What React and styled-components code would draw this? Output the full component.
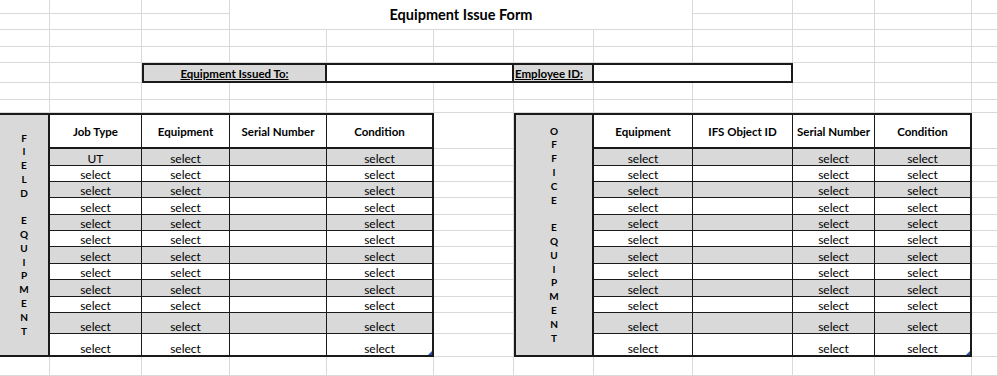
import React from 'react';
import styled, { createGlobalStyle } from 'styled-components';

const COLS = [50, 92, 88, 97, 107, 80, 80, 99, 100, 82, 97, 26];
const ROWS = [14, 16, 17, 16, 20, 17, 13, 36, 17, 16, 16, 17, 16, 16, 17, 16, 17, 16, 21, 23, 19];
const DATA_ROWS = [17, 16, 16, 17, 16, 16, 17, 16, 17, 16, 21, 21];

const GRID = '#d9d9d9';
const FILL = '#d9d9d9';
const INK = '#1a1a1a';

const Global = createGlobalStyle`
  html, body { margin: 0; padding: 0; background: #fff; }
  body { font-family: Lato, "Liberation Sans", sans-serif; color: #000; overflow: hidden; }
  * { box-sizing: border-box; }
`;

const Sheet = styled.div`
  display: grid;
  grid-template-columns: ${COLS.map((c) => c + 'px').join(' ')};
  grid-template-rows: ${ROWS.map((r) => r + 'px').join(' ')};
  width: 998px;
  height: 376px;
  overflow: hidden;
`;

const GridCell = styled.div`
  grid-row: ${(p) => p.$r};
  grid-column: ${(p) => p.$c};
  border-right: 1px solid ${GRID};
  border-bottom: 1px solid ${GRID};
`;

const Title = styled.div`
  grid-row: 1 / 3;
  grid-column: 4 / 9;
  display: flex;
  align-items: center;
  justify-content: center;
  font-weight: 700;
  font-size: 14.5px;
  border-right: 1px solid ${GRID};
  border-bottom: 1px solid ${GRID};
`;

const InfoBar = styled.div`
  grid-row: 5;
  grid-column: 3 / 10;
  display: grid;
  grid-template-columns: 183px 187px 80px 1fr;
  border: 2px solid ${INK};
`;

const InfoLabel = styled.div`
  background: ${FILL};
  display: flex;
  align-items: center;
  justify-content: ${(p) => (p.$left ? 'flex-start' : 'center')};
  padding-left: ${(p) => (p.$left ? '1px' : '0')};
  font-weight: 700;
  font-size: 11.5px;
  text-decoration: underline;
  border-right: 2px solid ${INK};
`;

const InfoValue = styled.div`
  background: #fff;
  border-right: ${(p) => (p.$last ? 'none' : `2px solid ${INK}`)};
`;

const Table = styled.div`
  grid-row: 8 / 21;
  grid-column: ${(p) => p.$span};
  display: grid;
  grid-template-columns: ${(p) => p.$template};
  grid-template-rows: 34px ${DATA_ROWS.map((r) => r + 'px').join(' ')};
  border: 2px solid ${INK};
  border-left: ${(p) => (p.$open ? 'none' : `2px solid ${INK}`)};
  background: #fff;
`;

const SideLabel = styled.div`
  grid-row: 1 / -1;
  grid-column: 1;
  background: ${FILL};
  border-right: 2px solid ${INK};
  display: flex;
  flex-direction: column;
  align-items: center;
  justify-content: center;
`;

const Letter = styled.span`
  display: block;
  font-weight: 700;
  font-size: 10px;
  line-height: 13.8px;
  height: 13.8px;
`;

const HeadCell = styled.div`
  display: flex;
  align-items: center;
  justify-content: center;
  font-weight: 700;
  font-size: 11.5px;
  border-bottom: 2px solid ${INK};
  border-right: ${(p) => (p.$last ? 'none' : `1px solid ${INK}`)};
`;

const DataCell = styled.div`
  position: relative;
  display: flex;
  align-items: flex-end;
  justify-content: center;
  font-size: 12px;
  line-height: 12px;
  background: ${(p) => (p.$shaded ? FILL : '#fff')};
  border-right: ${(p) => (p.$lastCol ? 'none' : `1px solid ${INK}`)};
  border-bottom: ${(p) => (p.$lastRow ? 'none' : `1px solid ${INK}`)};
`;

const Handle = styled.span`
  position: absolute;
  right: 0;
  bottom: 0;
  width: 0;
  height: 0;
  border-left: 4px solid transparent;
  border-bottom: 4px solid #2b4fa8;
`;

const occupied = new Set();
const mark = (r1, r2, c1, c2) => {
  for (let r = r1; r <= r2; r++) for (let c = c1; c <= c2; c++) occupied.add(r + ':' + c);
};
mark(1, 2, 4, 8);
mark(5, 5, 3, 9);
mark(8, 20, 1, 5);
mark(8, 20, 7, 11);

const emptyCells = [];
for (let r = 1; r <= ROWS.length; r++) {
  for (let c = 1; c <= COLS.length; c++) {
    if (!occupied.has(r + ':' + c)) emptyCells.push({ r, c });
  }
}

const fieldRows = ['UT', ...Array(11).fill('select')].map((job) => [job, 'select', '', 'select']);
const officeRows = Array(12).fill(['select', '', 'select', 'select']);

function SheetTable({ span, template, open, label, headers, rows }) {
  return (
    <Table $span={span} $template={template} $open={open}>
      <SideLabel>
        {label.split('').map((ch, i) => (
          <Letter key={i}>{ch === ' ' ? '\u00a0' : ch}</Letter>
        ))}
      </SideLabel>
      {headers.map((h, i) => (
        <HeadCell key={h} $last={i === headers.length - 1}>
          {h}
        </HeadCell>
      ))}
      {rows.map((row, ri) =>
        row.map((v, ci) => (
          <DataCell
            key={ri + '-' + ci}
            $shaded={ri % 2 === 0}
            $lastCol={ci === row.length - 1}
            $lastRow={ri === rows.length - 1}
          >
            {v}
            {ri === rows.length - 1 && ci === row.length - 1 && <Handle />}
          </DataCell>
        ))
      )}
    </Table>
  );
}

export default function App() {
  return (
    <>
      <Global />
      <Sheet>
        {emptyCells.map(({ r, c }) => (
          <GridCell key={r + '-' + c} $r={r} $c={c} />
        ))}
        <Title>Equipment Issue Form</Title>
        <InfoBar>
          <InfoLabel>Equipment Issued To:</InfoLabel>
          <InfoValue />
          <InfoLabel $left>Employee ID:</InfoLabel>
          <InfoValue $last />
        </InfoBar>
        <SheetTable
          span="1 / 6"
          template="50px 92px 88px 97px 1fr"
          open
          label="FIELD EQUIPMENT"
          headers={['Job Type', 'Equipment', 'Serial Number', 'Condition']}
          rows={fieldRows}
        />
        <SheetTable
          span="7 / 12"
          template="78px 99px 100px 82px 1fr"
          label="OFFICE EQUIPMENT"
          headers={['Equipment', 'IFS Object ID', 'Serial Number', 'Condition']}
          rows={officeRows}
        />
      </Sheet>
    </>
  );
}
